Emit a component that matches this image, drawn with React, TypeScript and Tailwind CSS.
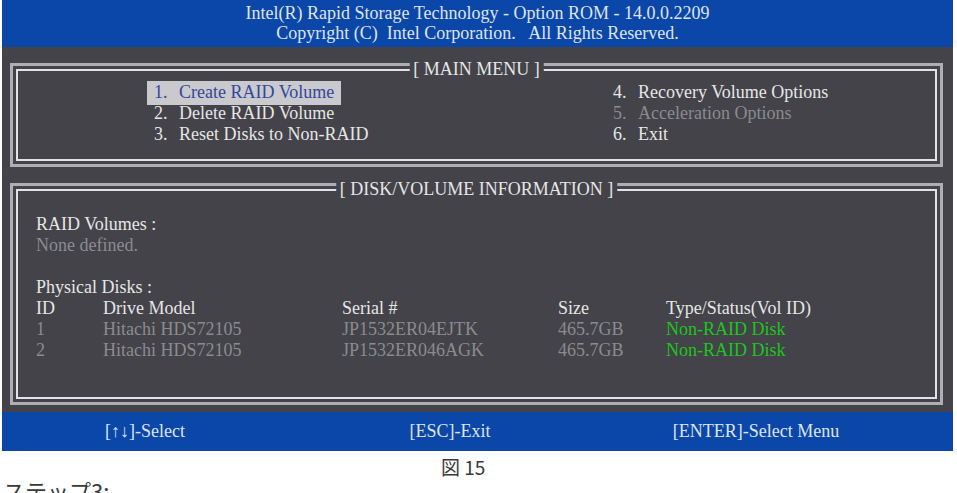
import type { ReactNode } from "react";

const serif = "font-['Liberation_Serif','Times_New_Roman',serif]";

// double-line frame used by the BIOS panels, title sits on the top edge
function Frame({ title, className, children }: { title: string; className?: string; children: ReactNode }) {
  return (
    <div className={`relative border-[3px] border-[#aeaeb3] p-[3px] ${className ?? ""}`}>
      <div className="h-full border-2 border-[#e2e2e4]">{children}</div>
      <div className="absolute left-1/2 top-[-7px] -translate-x-1/2 bg-[#434349] px-[4px] leading-[20px] text-[#e6e6e6] whitespace-nowrap">
        {title}
      </div>
    </div>
  );
}

function MenuItem({ num, label, active, dim }: { num: string; label: string; active?: boolean; dim?: boolean }) {
  const color = active ? "text-[#34479a]" : dim ? "text-[#8b8b8f]" : "text-[#e6e6e6]";
  return (
    <div className="h-[21px] flex items-center">
      <span className={`flex items-center px-[7px] h-[24px] ${active ? "bg-[#c9c9ce]" : ""} ${color}`}>
        <span className="w-[25px]">{num}</span>
        <span>{label}</span>
      </span>
    </div>
  );
}

const disks = [
  { id: "1", model: "Hitachi HDS72105", serial: "JP1532ER04EJTK", size: "465.7GB", status: "Non-RAID Disk" },
  { id: "2", model: "Hitachi HDS72105", serial: "JP1532ER046AGK", size: "465.7GB", status: "Non-RAID Disk" },
];

const cols = "grid grid-cols-[67px_239px_216px_108px_1fr] h-[21px] items-center";

export default function App() {
  return (
    <div className="w-[957px] h-[493px] overflow-hidden bg-white">
      <div className={`ml-[2px] w-[951px] ${serif} text-[18px] leading-[21px]`}>
        <header className="h-[47px] bg-[#0a47a9] pt-[3px] text-center text-[#dfe3ee] leading-[20px]">
          <div>Intel(R) Rapid Storage Technology - Option ROM - 14.0.0.2209</div>
          <div className="whitespace-pre">Copyright (C)  Intel Corporation.   All Rights Reserved.</div>
        </header>

        <main className="h-[365px] bg-[#434349] pl-[8px] pr-[10px] pt-[16px] flex flex-col gap-[16px]">
          <Frame title="[ MAIN MENU ]" className="h-[104px]">
            <div className="flex pt-[11px]">
              <div className="ml-[129px] w-[459px]">
                <MenuItem num="1." label="Create RAID Volume" active />
                <MenuItem num="2." label="Delete RAID Volume" />
                <MenuItem num="3." label="Reset Disks to Non-RAID" />
              </div>
              <div>
                <MenuItem num="4." label="Recovery Volume Options" />
                <MenuItem num="5." label="Acceleration Options" dim />
                <MenuItem num="6." label="Exit" />
              </div>
            </div>
          </Frame>

          <Frame title="[ DISK/VOLUME INFORMATION ]" className="h-[222px]">
            <div className="pt-[23px] pl-[18px] text-[#e6e6e6]">
              <div className="h-[21px]">RAID Volumes :</div>
              <div className="h-[21px] text-[#8b8b8f]">None defined.</div>
              <div className="h-[21px]" />
              <div className="h-[21px]">Physical Disks :</div>
              <div className={cols}>
                <span>ID</span>
                <span>Drive Model</span>
                <span>Serial #</span>
                <span>Size</span>
                <span>Type/Status(Vol ID)</span>
              </div>
              {disks.map((d) => (
                <div key={d.id} className={`${cols} text-[#8b8b8f]`}>
                  <span>{d.id}</span>
                  <span>{d.model}</span>
                  <span>{d.serial}</span>
                  <span>{d.size}</span>
                  <span className="text-[#1fc41f]">{d.status}</span>
                </div>
              ))}
            </div>
          </Frame>
        </main>

        <footer className="h-[39px] bg-[#0a47a9] flex items-center text-[#dfe3ee]">
          <span className="w-[286px] text-center">[↑↓]-Select</span>
          <span className="w-[324px] text-center">[ESC]-Exit</span>
          <span className="w-[288px] text-center">[ENTER]-Select Menu</span>
        </footer>
      </div>

      <div className="font-['Noto_Sans_CJK_JP',sans-serif] text-[#3a3a3a]">
        <div className="mt-[6px] ml-[441px] text-[19px] leading-[20px]">図 15</div>
        <div className="pl-[3px] text-[22px] leading-[26px]">ステップ3:</div>
      </div>
    </div>
  );
}
